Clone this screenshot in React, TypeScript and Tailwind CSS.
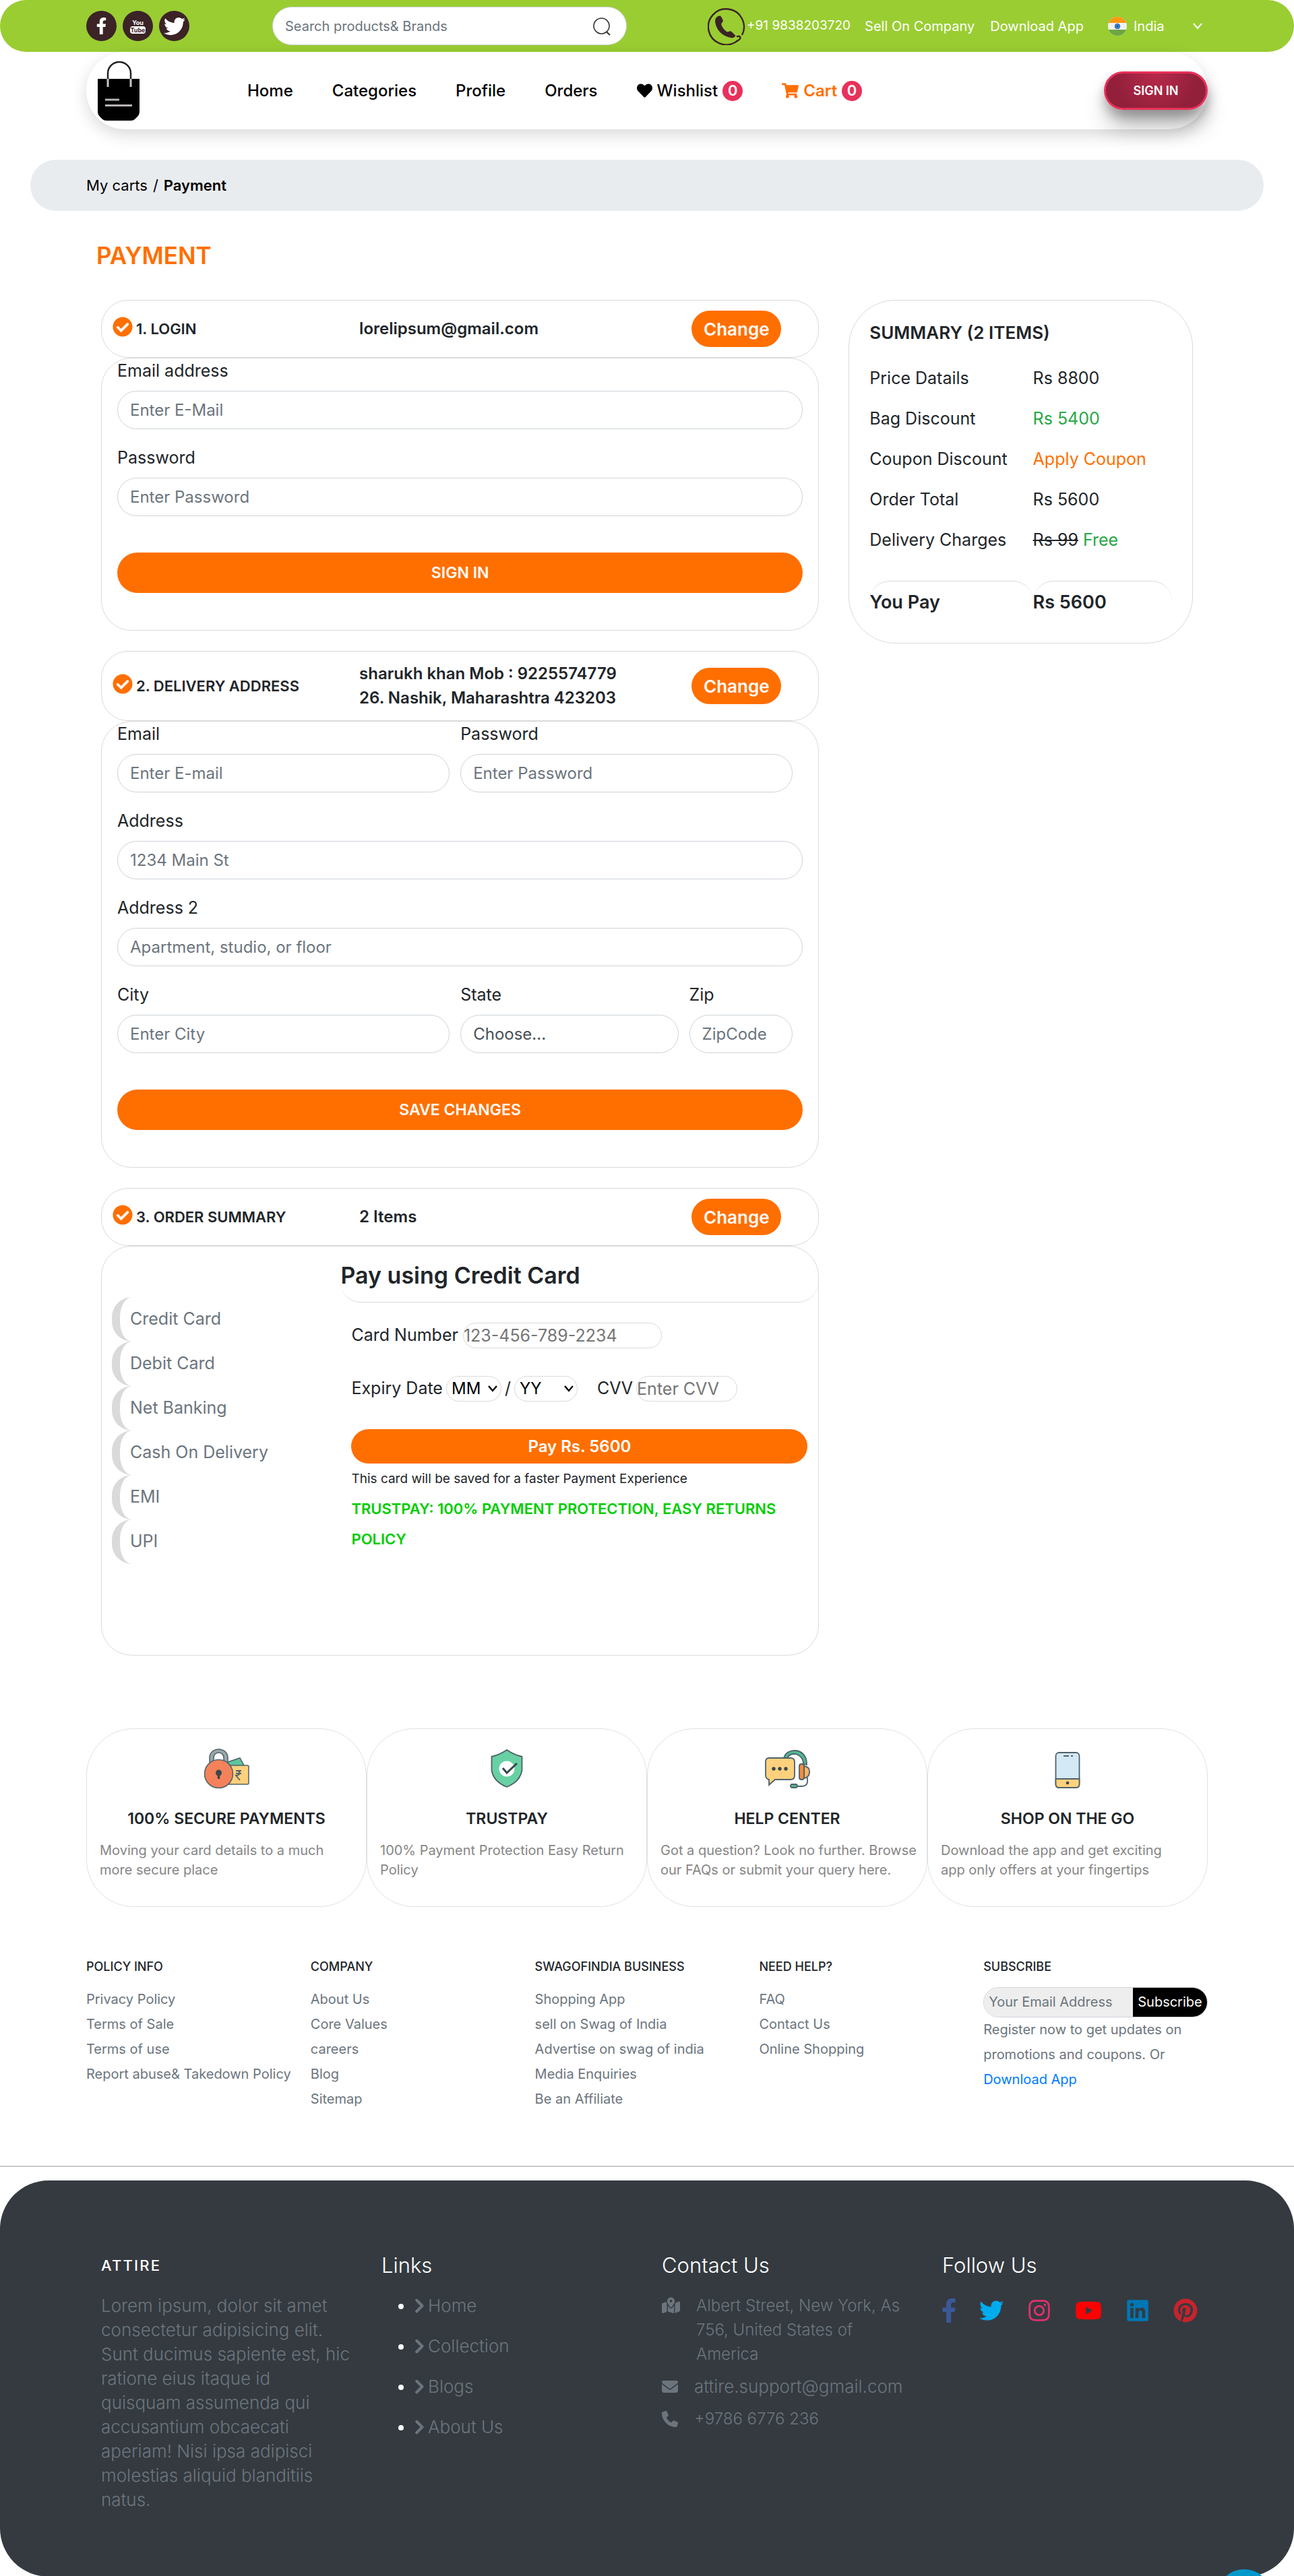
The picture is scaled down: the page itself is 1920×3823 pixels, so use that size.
import React from "react";
import { FaFacebookF, FaTwitter, FaInstagram, FaYoutube, FaLinkedin, FaPinterest, FaCheckCircle, FaHeart, FaShoppingCart } from "react-icons/fa";
import { FaChevronRight, FaMapLocationDot, FaEnvelope, FaPhone } from "react-icons/fa6";

const field =
  "block h-[57px] w-full rounded-full border border-[#ced4da] bg-white px-[18px] text-2xl text-[#495057] placeholder:text-[#6c757d]";

/* ---------- drawings ---------- */

function BagLogo() {
  return (
    <svg viewBox="0 0 64 90" className="h-[90px] w-16" aria-hidden="true">
      <path d="M1 27H63V76Q63 80 60 83L56 87Q54 89 50 89H14Q10 89 8 87L4 83Q1 80 1 76Z" fill="#000" />
      <path d="M16 27V19A17 17 0 0 1 50 19V27" fill="none" stroke="#222" strokeWidth="2.5" />
      <path d="M16 27V39M50 27V39" stroke="#c9c5c5" strokeWidth="3" />
      <path d="M12 58H33M12 66.500H52" stroke="#b9b3b3" strokeWidth="3" />
    </svg>
  );
}

function PhoneLogo() {
  return (
    <svg viewBox="0 0 56 56" className="size-14" aria-hidden="true">
      <path d="M51 41A26.500 26.500 0 1 0 42 51C46 48 50 47 48 43.500Q46 42 43 43.500" fill="none" stroke="#3b2326" strokeWidth="2.400" />
      <path d="M11.500 17Q14 12 19 12.500Q22 16 23 20Q22 22 20 24.500Q22 32 29 36.500L34 35Q38 38 41.500 42Q39 46 34 45Q16 41 11.500 24Q10.500 20 11.500 17Z" fill="#3b2326" />
    </svg>
  );
}

function FlagIcon() {
  return (
    <svg viewBox="0 0 28 28" className="size-7 shrink-0" aria-hidden="true">
      <clipPath id="flag-circle">
        <circle cx="14" cy="14" r="14" />
      </clipPath>
      <g clipPath="url(#flag-circle)">
        <rect width="28" height="28" fill="#f0f0f0" />
        <rect width="28" height="9" fill="#ff9811" />
        <rect y="19" width="28" height="9" fill="#6da544" />
      </g>
      <circle cx="14" cy="14" r="4" fill="#0052b4" />
      <circle cx="14" cy="14" r="2.500" fill="none" stroke="#8fb4e0" />
    </svg>
  );
}

function SecureIcon() {
  return (
    <svg viewBox="0 0 68 60" className="h-[60px] w-[68px]" fill="none" stroke="#4f6169" strokeWidth="1.500" aria-hidden="true">
      <path d="M36 20L54 14L60 25L40 34Z" fill="#5fc49c" />
      <rect x="34" y="25" width="33" height="28" rx="2" fill="#ffd17d" />
      <path d="M48 33H56M48 37H56M50 33Q55 34 53 38Q52 40 48 40L54 47" strokeWidth="1.800" />
      <path d="M9 22V13A13.500 12 0 0 1 36 13V22H30V14A7.500 8 0 0 0 15 14V22Z" fill="#9aa5aa" />
      <circle cx="22.500" cy="37.500" r="21" fill="#f3825a" />
      <circle cx="22.500" cy="36" r="4.500" fill="#3b474d" stroke="none" />
      <path d="M22.500 38V45" stroke="#3b474d" strokeWidth="3.500" />
    </svg>
  );
}

function ShieldIcon() {
  return (
    <svg viewBox="0 0 50 60" className="h-[60px] w-[50px]" aria-hidden="true">
      <path d="M25 2Q35 9 47.500 12V32Q45 49 25 57Q5 49 2.500 32V12Q15 9 25 2Z" fill="#68d1a4" stroke="#4f6169" strokeWidth="1.800" />
      <circle cx="25" cy="30" r="11.500" fill="#fff" />
      <path d="M19 29L25 36L40 22" fill="none" stroke="#36474f" strokeWidth="3" />
    </svg>
  );
}

function HelpIcon() {
  return (
    <svg viewBox="0 0 68 60" className="h-[60px] w-[68px]" fill="none" stroke="#4f6169" strokeWidth="1.800" aria-hidden="true">
      <path d="M29 15C31 -2 64 -3 63 24L58 23C58 7 38 3 34 15Z" fill="#4fb795" />
      <path d="M7 14H39Q45 14 45 20V40Q45 46 39 46H16L7 54V46Q2 45 2 39V20Q2 14 7 14Z" fill="#ffd17d" />
      <path d="M59 26Q68 27 67 36Q66 43 59 44Z" fill="#ffb266" />
      <rect x="52" y="23" width="7" height="23" rx="3" fill="#f28d3c" />
      <path d="M64 43V50Q63 56 55 56H49" />
      <rect x="39" y="53" width="10" height="5" rx="2.500" fill="#4fb795" />
      <g fill="#36474f" stroke="none">
        <circle cx="14" cy="30" r="2.700" />
        <circle cx="23" cy="30" r="2.700" />
        <circle cx="32" cy="30" r="2.700" />
      </g>
    </svg>
  );
}

function MobileIcon() {
  return (
    <svg viewBox="0 0 38 60" className="h-[60px] w-[38px]" stroke="#4f6169" strokeWidth="1.800" aria-hidden="true">
      <rect x="1.500" y="6" width="35" height="52" rx="5" fill="#d4e9f6" />
      <path d="M1.500 45H36.500V53Q36.500 58 31.500 58H6.500Q1.500 58 1.500 53Z" fill="#ffd17d" />
      <circle cx="19" cy="51" r="2.300" fill="#36474f" stroke="none" />
      <path d="M13 11H21M24 11H27" strokeWidth="2" />
    </svg>
  );
}

/* ---------- page parts ---------- */

function TopBar() {
  const round = "flex size-[45px] items-center justify-center rounded-full bg-[#3b2326] text-white";
  return (
    <header className="flex h-[77px] items-center rounded-full bg-[#9acd32] px-32 text-xl text-white">
      <div className="flex gap-[9px]">
        <a href="#" aria-label="Facebook" className={round}>
          <FaFacebookF size={25} />
        </a>
        <a href="#" aria-label="YouTube" className={round}>
          <span className="flex flex-col items-center text-[9px] leading-[11px] font-bold">
            <span>You</span>
            <span className="rounded-sm bg-white px-px text-[#3b2326]">Tube</span>
          </span>
        </a>
        <a href="#" aria-label="Twitter" className={round}>
          <FaTwitter size={32} />
        </a>
      </div>
      <form className="ml-[123px] flex h-[57px] w-[526px] items-center rounded-full border border-[#ced4da] bg-white pr-[22px] pl-[18px]">
        <input aria-label="Search" placeholder="Search products& Brands" className="min-w-0 flex-1 text-[#495057] outline-none placeholder:text-[#6c757d]" />
        <button type="button" aria-label="Search">
          <svg viewBox="0 0 28 28" className="size-7" fill="none" stroke="#333" strokeWidth="1.600" aria-hidden="true">
            <circle cx="13.500" cy="13.500" r="11.500" />
            <path d="M20.500 22L26 27" strokeWidth="2.200" />
          </svg>
        </button>
      </form>
      <a href="#" className="ml-[120px] flex items-center gap-0.5 text-[19px] whitespace-nowrap">
        <PhoneLogo />
        +91 9838203720
      </a>
      <a href="#" className="ml-[21px] whitespace-nowrap">Sell On Company</a>
      <a href="#" className="ml-[23px] whitespace-nowrap">Download App</a>
      <div className="ml-auto flex items-center">
        <FlagIcon />
        <select aria-label="Country" className="ml-2.5 w-[88px] appearance-none bg-transparent">
          <option>India</option>
        </select>
        <svg viewBox="0 0 14 10" className="mr-2 h-2.5 w-3.5" fill="none" stroke="#fff" strokeWidth="2" aria-hidden="true">
          <path d="M1 1L7 8L13 1" />
        </svg>
      </div>
    </header>
  );
}

function Badge() {
  return (
    <span className="flex size-[30px] items-center justify-center rounded-full bg-[#e8315b] text-[22px] font-semibold text-white">0</span>
  );
}

function NavBar() {
  return (
    <div className="relative mx-32 flex h-[115px] items-center rounded-full bg-white pl-4 shadow-[0_8px_24px_rgba(0,0,0,0.15)]">
      <a href="#" aria-label="Attire">
        <BagLogo />
      </a>
      <nav className="ml-[159px] flex items-center gap-[58px] text-2xl font-medium text-black">
        <a href="#">Home</a>
        <a href="#">Categories</a>
        <a href="#">Profile</a>
        <a href="#">Orders</a>
        <a href="#" className="flex items-center gap-[7px]">
          <FaHeart size={23} /> Wishlist <Badge />
        </a>
        <a href="#" className="flex items-center gap-[7px] font-semibold text-[#ff6f00]">
          <FaShoppingCart size={25} /> Cart <Badge />
        </a>
      </nav>
      <button className="ml-auto h-[57px] w-[154px] rounded-full border-[3px] border-[#e8315b] bg-[radial-gradient(circle_at_50%_0%,#b8294b_0%,#92203a_70%)] text-lg font-semibold text-white shadow-[0_10px_16px_rgba(0,0,0,0.25),0_28px_36px_-6px_rgba(0,0,0,0.3)]">
        SIGN IN
      </button>
    </div>
  );
}

function Section({ title, info, children }: { title: string; info: string[]; children: React.ReactNode }) {
  return (
    <section className="mb-[30px] last:mb-0">
      <div className="grid grid-cols-[382fr_493fr_188fr] items-center rounded-[40px] border border-[#dadada] py-[15px] font-semibold">
        <h2 className="flex items-center gap-[5px] pl-4 text-[22px] leading-9">
          <FaCheckCircle size={30} className="mb-1.5 shrink-0 text-[#ff6f00]" />
          {title}
        </h2>
        <div className="text-2xl leading-9">
          {info.map((line) => (
            <p key={line}>{line}</p>
          ))}
        </div>
        <button className="h-[54px] w-[133px] rounded-full bg-[#ff6f00] text-[26px] text-white">Change</button>
      </div>
      <div className="rounded-[45px] border border-[#dadada]">{children}</div>
    </section>
  );
}

function Field({ id, label, placeholder, type = "text", className = "" }: { id: string; label: string; placeholder: string; type?: string; className?: string }) {
  return (
    <div className={className}>
      <label htmlFor={id} className="mb-3 block text-[25px] leading-9">
        {label}
      </label>
      <input id={id} type={type} placeholder={placeholder} className={field} />
    </div>
  );
}

const mainButton = "mt-[30px] mb-[55px] h-[60px] w-full rounded-full bg-[#ff6f00] text-[23px] font-semibold text-white";

function Login() {
  return (
    <Section title="1. LOGIN" info={["lorelipsum@gmail.com"]}>
      <form className="flex flex-col gap-6 px-[23px]">
        <Field id="login-email" label="Email address" placeholder="Enter E-Mail" type="email" />
        <Field id="login-password" label="Password" placeholder="Enter Password" type="password" />
        <button type="button" className={mainButton}>SIGN IN</button>
      </form>
    </Section>
  );
}

function Delivery() {
  return (
    <Section title="2. DELIVERY ADDRESS" info={["sharukh khan Mob : 9225574779", "26. Nashik, Maharashtra 423203"]}>
      <form className="flex flex-col gap-6 px-[23px]">
        <div className="mr-[15px] grid grid-cols-2 gap-4">
          <Field id="email" label="Email" placeholder="Enter E-mail" type="email" />
          <Field id="password" label="Password" placeholder="Enter Password" type="password" />
        </div>
        <Field id="address" label="Address" placeholder="1234 Main St" />
        <Field id="address2" label="Address 2" placeholder="Apartment, studio, or floor" />
        <div className="mr-[15px] grid grid-cols-12 gap-4">
          <Field id="city" label="City" placeholder="Enter City" className="col-span-6" />
          <div className="col-span-4">
            <label htmlFor="state" className="mb-3 block text-[25px] leading-9">State</label>
            <select id="state" className={field + " appearance-none"}>
              <option>Choose...</option>
            </select>
          </div>
          <Field id="zip" label="Zip" placeholder="ZipCode" className="col-span-2" />
        </div>
        <button type="button" className={mainButton}>SAVE CHANGES</button>
      </form>
    </Section>
  );
}

const methods = ["Credit Card", "Debit Card", "Net Banking", "Cash On Delivery", "EMI", "UPI"];
const smallField = "h-[38px] rounded-full border border-[#dadada] bg-white placeholder:text-[#757575]";

function ExpirySelect({ label, text, className }: { label: string; text: string; className: string }) {
  return (
    <span className="relative">
      <select aria-label={label} className={smallField + " appearance-none pl-[7px] text-2xl text-black " + className}>
        <option>{text}</option>
      </select>
      <svg viewBox="0 0 14 10" className="pointer-events-none absolute top-3.5 right-1.5 h-2.5 w-3.5" fill="none" stroke="#000" strokeWidth="2.400" aria-hidden="true">
        <path d="M1 1L7 8L13 1" />
      </svg>
    </span>
  );
}

function Payment() {
  return (
    <Section title="3. ORDER SUMMARY" info={["2 Items"]}>
      <div className="flex pb-[135px] text-[25px]">
        <div className="flex w-1/3 flex-col px-[15px] pt-[75px]">
          {methods.map((m) => (
            <button key={m} className="h-[66px] rounded-[30px] border-l-[12px] border-[#dadada] pl-[15px] text-left text-[#6c757d]">
              {m}
            </button>
          ))}
        </div>
        <div className="w-2/3">
          <h3 className="h-[83px] rounded-[30px] border-b border-[#dadada] pt-6 text-[34px] leading-[38px] font-semibold">Pay using Credit Card</h3>
          <form className="px-4 pt-[30px]">
            <div className="flex items-center gap-[7px]">
              <label htmlFor="card">Card Number</label>
              <input id="card" placeholder="123-456-789-2234" className={smallField + " w-[295px]"} />
            </div>
            <div className="mt-[41px] flex items-center gap-[5px]">
              <span>Expiry Date</span>
              <ExpirySelect label="Expiry month" text="MM" className="w-[82px]" />
              <span>/</span>
              <ExpirySelect label="Expiry year" text="YY" className="w-[94px]" />
              <label htmlFor="cvv" className="ml-6">CVV</label>
              <input id="cvv" placeholder="Enter CVV" className={smallField + " w-[150px]"} />
            </div>
            <button type="button" className="mt-[41px] h-[51px] w-full rounded-full bg-[#ff6f00] text-2xl font-semibold text-white">Pay Rs. 5600</button>
            <p className="text-[19px] leading-[45px]">This card will be saved for a faster Payment Experience</p>
            <p className="text-[22px] leading-[45px] font-semibold text-[#00cd00]">TRUSTPAY: 100% PAYMENT PROTECTION, EASY RETURNS POLICY</p>
          </form>
        </div>
      </div>
    </Section>
  );
}

function Summary() {
  const rows: [string, React.ReactNode][] = [
    ["Price Datails", "Rs 8800"],
    ["Bag Discount", <span className="text-[#28a745]">Rs 5400</span>],
    ["Coupon Discount", <a href="#" className="text-[#ff6f00]">Apply Coupon</a>],
    ["Order Total", "Rs 5600"],
    ["Delivery Charges", <><s>Rs 99</s> <span className="text-[#28a745]">Free</span></>],
  ];
  return (
    <aside className="rounded-[70px] border border-[#dadada] px-[30px] py-[30px] whitespace-nowrap">
      <h2 className="mb-5 text-[26px] leading-9 font-semibold">SUMMARY (2 ITEMS)</h2>
      <table className="w-full border-separate border-spacing-0 text-[25px]">
        <tbody>
          {rows.map(([k, v]) => (
            <tr key={k} className="h-[60px]">
              <td className="w-[54%] p-0">{k}</td>
              <td className="p-0">{v}</td>
            </tr>
          ))}
          <tr className="text-[27px] leading-[61px] font-semibold">
            <td className="px-0 pt-[30px] pb-0"><div className="rounded-t-[30px] border-t border-[#dadada]">You Pay</div></td>
            <td className="px-0 pt-[30px] pb-0"><div className="rounded-t-[30px] border-t border-[#dadada]">Rs 5600</div></td>
          </tr>
        </tbody>
      </table>
    </aside>
  );
}

const services = [
  { icon: <SecureIcon />, title: "100% SECURE PAYMENTS", lines: ["Moving your card details to a much", "more secure place"] },
  { icon: <ShieldIcon />, title: "TRUSTPAY", lines: ["100% Payment Protection Easy Return", "Policy"] },
  { icon: <HelpIcon />, title: "HELP CENTER", lines: ["Got a question? Look no further. Browse", "our FAQs or submit your query here."] },
  { icon: <MobileIcon />, title: "SHOP ON THE GO", lines: ["Download the app and get exciting", "app only offers at your fingertips"] },
];

function Services() {
  return (
    <section className="mx-32 mt-[108px] grid grid-cols-4">
      {services.map((s) => (
        <article key={s.title} className="flex flex-col items-center rounded-[70px] border border-[#dee2e6] pt-[29px] pb-[39px]">
          {s.icon}
          <h3 className="mt-[26px] text-[23px] leading-9 font-semibold">{s.title}</h3>
          <p className="mt-[15px] w-full px-[19px] text-xl leading-[29px] whitespace-nowrap text-[#868686]">
            {s.lines[0]}
            <br />
            {s.lines[1]}
          </p>
        </article>
      ))}
    </section>
  );
}

const linkGroups = [
  { title: "POLICY INFO", items: ["Privacy Policy", "Terms of Sale", "Terms of use", "Report abuse& Takedown Policy"] },
  { title: "COMPANY", items: ["About Us", "Core Values", "careers", "Blog", "Sitemap"] },
  { title: "SWAGOFINDIA BUSINESS", items: ["Shopping App", "sell on Swag of India", "Advertise on swag of india", "Media Enquiries", "Be an Affiliate"] },
  { title: "NEED HELP?", items: ["FAQ", "Contact Us", "Online Shopping"] },
];

function SiteLinks() {
  const heading = "mb-3 text-[18px] leading-[37px] font-medium";
  return (
    <section className="mx-32 mt-[70px] mb-20 grid grid-cols-5 text-xl leading-[37px] text-[#6c757d]">
      {linkGroups.map((g) => (
        <div key={g.title}>
          <h4 className={heading + " text-[#212529]"}>{g.title}</h4>
          <ul className="whitespace-nowrap">
            {g.items.map((i) => (
              <li key={i}><a href="#">{i}</a></li>
            ))}
          </ul>
        </div>
      ))}
      <div>
        <h4 className={heading + " text-[#212529]"}>SUBSCRIBE</h4>
        <form className="flex h-[45px] overflow-hidden rounded-full border border-[#ced4da]">
          <input aria-label="Your Email Address" placeholder="Your Email Address" className="min-w-0 flex-1 bg-[#eeeeee] pl-[7px] placeholder:text-[#6c757d]" />
          <button type="button" className="w-[110px] bg-black text-white">Subscribe</button>
        </form>
        <p>
          Register now to get updates on promotions and coupons. Or
          <a href="#" className="block text-[#007bff]">Download App</a>
        </p>
      </div>
    </section>
  );
}

function Footer() {
  const col = "w-1/4 px-[22px]";
  const heading = "mb-6 text-[31px] leading-9 font-light text-white";
  return (
    <footer className="flex rounded-[72px] bg-[#343a40] px-32 pt-[108px] pb-24 text-[26px] leading-9 font-light text-[#6c757d]">
      <div className={col + " whitespace-nowrap"}>
        <h4 className="mb-6 text-[22px] leading-9 font-medium tracking-widest text-white">ATTIRE</h4>
        <p>
          Lorem ipsum, dolor sit amet<br />consectetur adipisicing elit.<br />Sunt ducimus sapiente est, hic<br />
          ratione eius itaque id<br />quisquam assumenda qui<br />accusantium obcaecati<br />
          aperiam! Nisi ipsa adipisci<br />molestias aliquid blanditiis<br />natus.
        </p>
      </div>
      <div className={col}>
        <h4 className={heading}>Links</h4>
        <ul className="list-disc pl-12 marker:text-white">
          {["Home", "Collection", "Blogs", "About Us"].map((l) => (
            <li key={l} className="mb-6">
              <a href="#">
                <FaChevronRight size={22} stroke="currentColor" strokeWidth={30} className="mr-[3px] mb-1 -ml-1 inline" />
                {l}
              </a>
            </li>
          ))}
        </ul>
      </div>
      <div className={col}>
        <h4 className={heading}>Contact Us</h4>
        <address className="flex flex-col gap-3 whitespace-nowrap not-italic">
          <p className="flex gap-6">
            <FaMapLocationDot size={27} className="mt-1 shrink-0" />
            <span className="text-2xl leading-9">Albert Street, New York, As<br />756, United States of<br />America</span>
          </p>
          <p className="flex items-center gap-6">
            <FaEnvelope size={24} className="shrink-0" />
            <a href="#">attire.support@gmail.com</a>
          </p>
          <p className="flex items-center gap-6">
            <FaPhone size={24} className="shrink-0" />
            <a href="#" className="text-2xl leading-9">+9786 6776 236</a>
          </p>
        </address>
      </div>
      <div className={col}>
        <h4 className={heading}>Follow Us</h4>
        <div className="flex h-[50px] items-center gap-[35px]">
          <a href="#" aria-label="Facebook" className="text-[#3b5998]"><FaFacebookF size={36} className="-mx-2" /></a>
          <a href="#" aria-label="Twitter" className="text-[#00acee]"><FaTwitter size={36} /></a>
          <a href="#" aria-label="Instagram" className="text-[#e1306c]"><FaInstagram size={36} /></a>
          <a href="#" aria-label="YouTube" className="text-[#ff0000]"><FaYoutube size={40} /></a>
          <a href="#" aria-label="LinkedIn" className="text-[#0077b5]"><FaLinkedin size={36} /></a>
          <a href="#" aria-label="Pinterest" className="text-[#c8232c]"><FaPinterest size={36} /></a>
        </div>
      </div>
    </footer>
  );
}

export default function App() {
  return (
    <div className="relative overflow-hidden bg-white font-[Inter,sans-serif] text-[#212529]">
      <TopBar />
      <NavBar />
      <div className="mx-[45px] mt-[45px] flex h-[76px] items-center gap-2 rounded-full bg-[#e9ecef] px-[83px] text-[22px] text-black">
        <a href="#">My carts</a>
        <span>/</span>
        <span className="font-semibold">Payment</span>
      </div>
      <main className="mx-32">
        <h1 className="py-[42px] pl-[15px] text-[35px] leading-[48px] font-semibold text-[#ff6f00]">PAYMENT</h1>
        <div className="flex items-start">
          <div className="w-2/3 px-[22px]">
            <Login />
            <Delivery />
            <Payment />
          </div>
          <div className="w-1/3 px-[22px]">
            <Summary />
          </div>
        </div>
      </main>
      <Services />
      <SiteLinks />
      <hr className="mb-5 border-t-2 border-[#c8c8c8]" />
      <Footer />
      <button aria-label="Back to top" className="absolute right-[33px] -bottom-[71px] size-[82px] rounded-full bg-[#0099cc]" />
    </div>
  );
}
